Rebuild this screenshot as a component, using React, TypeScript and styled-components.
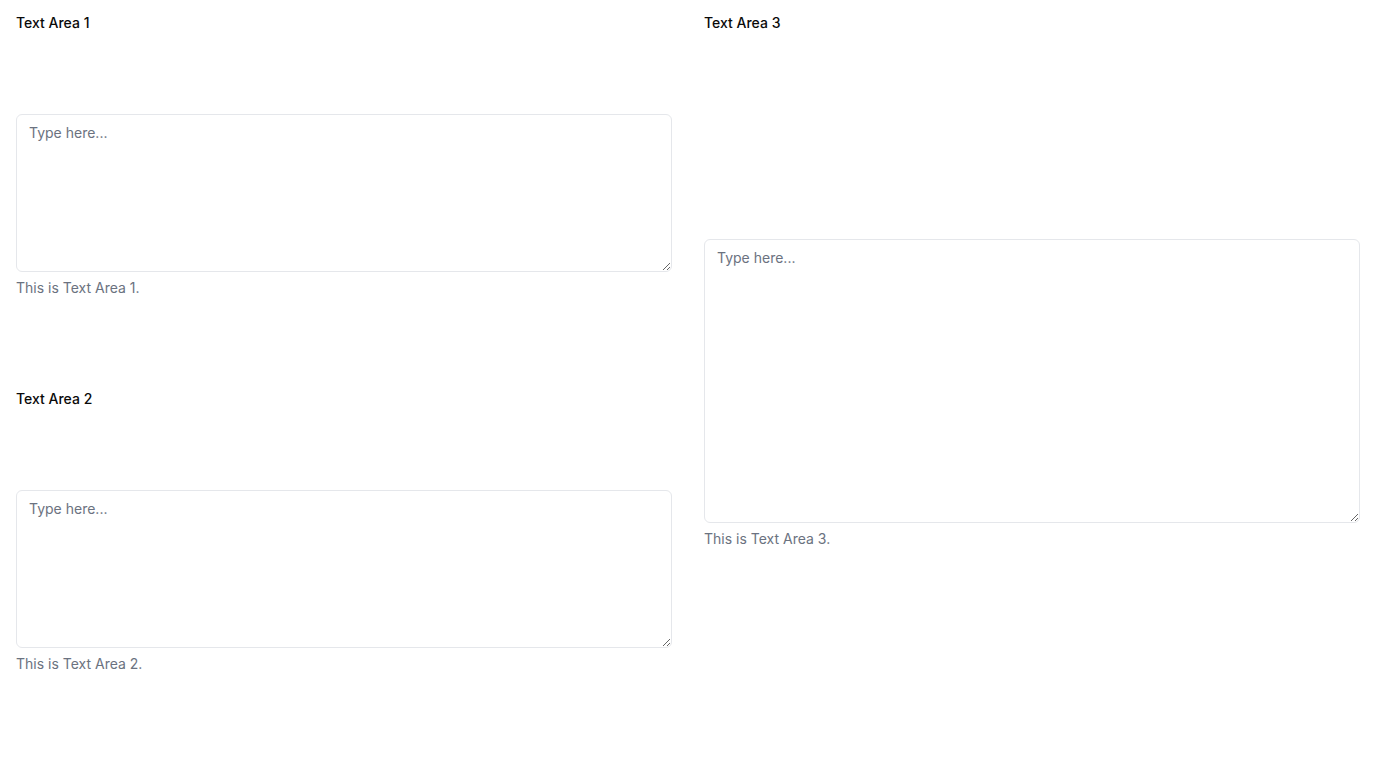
import styled, { createGlobalStyle } from "styled-components";

const GlobalStyle = createGlobalStyle`
  body {
    margin: 0;
    background: #ffffff;
    font-family: Inter, "Noto Sans", sans-serif;
    color: #0a0a0a;
  }
`;

const Page = styled.div`
  display: grid;
  grid-template-columns: 1fr 1fr;
  column-gap: 32px;
  padding: 13px 16px;
  align-items: start;
`;

const Column = styled.div`
  display: flex;
  flex-direction: column;
`;

const Field = styled.div<{ $top?: number }>`
  display: flex;
  flex-direction: column;
  margin-top: ${props => props.$top ?? 0}px;
`;

const Label = styled.label`
  font-size: 14px;
  font-weight: 500;
  line-height: 20px;
  color: #0a0a0a;
`;

const Area = styled.textarea<{ $gap: number; $height: number }>`
  box-sizing: border-box;
  margin-top: ${props => props.$gap}px;
  height: ${props => props.$height}px;
  width: 100%;
  padding: 8px 12px;
  border: 1px solid #e5e7eb;
  border-radius: 6px;
  font-family: inherit;
  font-size: 14px;
  line-height: 20px;
  color: #0a0a0a;
  background: #ffffff;
  outline: none;

  &::placeholder {
    color: #6b7280;
  }
`;

const Help = styled.p`
  margin: 6px 0 0;
  font-size: 14px;
  line-height: 20px;
  color: #6b7280;
`;

interface IArea {
  id: number;
  gap: number;
  height: number;
  top?: number;
}

function TextField({ id, gap, height, top }: IArea) {
  return (
    <Field $top={top}>
      <Label htmlFor={`ta-${id}`}>Text Area {id}</Label>
      <Area id={`ta-${id}`} placeholder="Type here..." $gap={gap} $height={height} />
      <Help>This is Text Area {id}.</Help>
    </Field>
  );
}

function App() {
  return (
    <>
      <GlobalStyle />
      <Page>
        <Column>
          <TextField id={1} gap={81} height={158} />
          <TextField id={2} gap={81} height={158} top={91} />
        </Column>
        <Column>
          <TextField id={3} gap={206} height={284} />
        </Column>
      </Page>
    </>
  );
}

export default App;
